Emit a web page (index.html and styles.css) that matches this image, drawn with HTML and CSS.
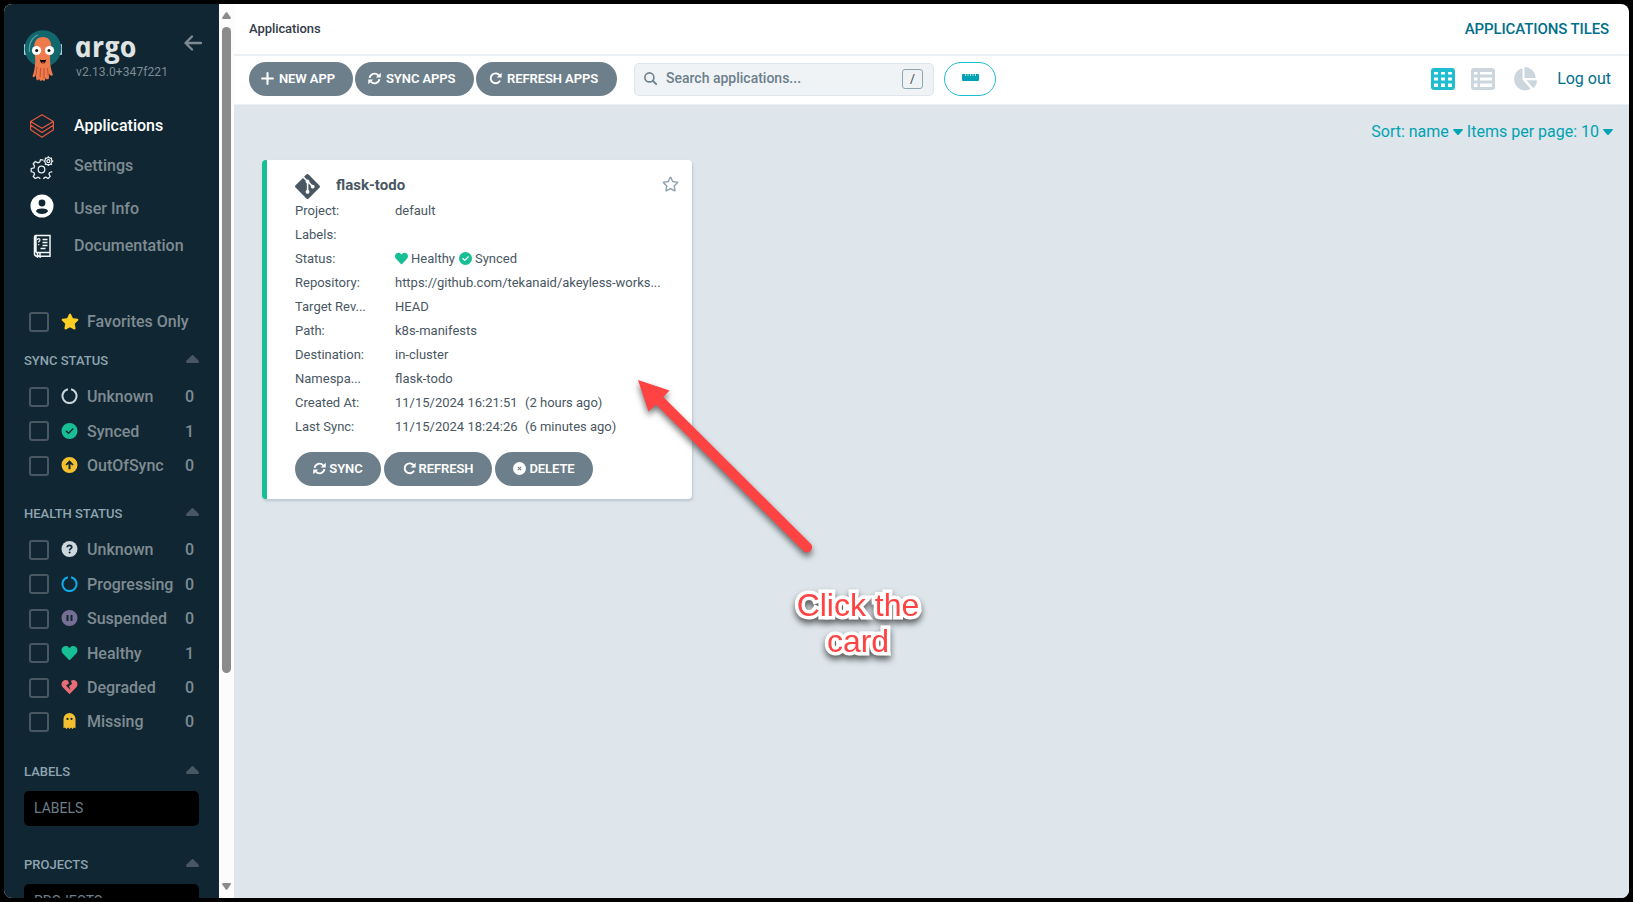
FILE: index.html
```html
<!DOCTYPE html>
<html lang="en">
<head>
<meta charset="utf-8">
<title>Applications Tiles - Argo CD</title>
<link rel="stylesheet" href="styles.css">
</head>
<body>
<svg class="defs" aria-hidden="true">
  <symbol id="star" viewBox="0 0 576 512"><path d="M259.3 17.8L194 150.2 47.9 171.5c-26.2 3.8-36.7 36.1-17.7 54.6l105.7 103-25 145.5c-4.5 26.3 23.2 46 46.4 33.7L288 439.6l130.7 68.7c23.2 12.2 50.9-7.4 46.4-33.7l-25-145.5 105.7-103c19-18.5 8.5-50.8-17.7-54.6L382 150.2 316.7 17.8c-11.7-23.6-45.6-23.9-57.4 0z"/></symbol>
  <symbol id="star-o" viewBox="0 0 576 512"><path d="M528.1 171.5L382 150.2 316.7 17.8c-11.7-23.6-45.6-23.9-57.4 0L194 150.2 47.9 171.5c-26.2 3.8-36.7 36.1-17.7 54.6l105.7 103-25 145.5c-4.5 26.3 23.2 46 46.4 33.7L288 439.6l130.7 68.7c23.2 12.2 50.9-7.4 46.4-33.7l-25-145.5 105.7-103c19-18.5 8.500-50.800-17.700-54.600zM388.600 312.300l23.700 138.400L288 385.400l-124.300 65.300 23.700-138.400-100.600-98 139-20.200 62.200-126 62.200 126 139 20.200-100.600 98z"/></symbol>
  <symbol id="heart" viewBox="0 0 512 512"><path d="M462.3 62.6C407.5 15.9 326 24.3 275.7 76.2L256 96.5l-19.7-20.3C186.1 24.3 104.5 15.9 49.7 62.6c-62.8 53.6-66.1 149.8-9.9 207.9l193.5 199.8c12.5 12.9 32.8 12.9 45.3 0l193.5-199.8c56.3-58.1 53-154.3-9.8-207.9z"/></symbol>
  <symbol id="broken" viewBox="0 0 512 512"><path d="M473.7 73.8l-2.4-2.5c-46-47-118-51.7-169.6-14.8L336 159.9l-96 64 48 128-144-144 96-64-28.6-86.5C159.7 19.6 87 24 40.7 71.4l-2.4 2.4C-10.4 123.6-12.5 202.9 31 256l212.1 218.6c7.1 7.3 18.6 7.3 25.7 0L481 255.9c43.5-53 41.4-132.3-7.3-182.1z"/></symbol>
  <symbol id="check" viewBox="0 0 16 16"><path fill-rule="evenodd" d="M8 0a8 8 0 1 1 0 16A8 8 0 0 1 8 0zM11.300 5L7 9.300 4.900 7.200 3.900 8.200 7 11.300 12.300 6z"/></symbol>
  <symbol id="up" viewBox="0 0 16 16"><path fill-rule="evenodd" d="M8 0a8 8 0 1 1 0 16A8 8 0 0 1 8 0zM8 3.3L3.9 7.4 5 8.5 7 7V12.3H9V7L11 8.5 12.1 7.4z"/></symbol>
  <symbol id="notch" viewBox="0 0 16 16"><path d="M9.600 1.200a7 7 0 1 1-3.200 0" fill="none" stroke="currentColor" stroke-width="2"/></symbol>
  <symbol id="question" viewBox="0 0 16 16"><circle cx="8" cy="8" r="8"/><path d="M5.7 6.2C5.8 4.9 6.6 4.4 8 4.4s2.3.7 2.3 1.8C10.3 7.6 8.100 7.500 8.100 9.400" fill="none" stroke="#102733" stroke-width="1.6"/><circle cx="8.1" cy="11.6" r="1" fill="#102733"/></symbol>
  <symbol id="pause" viewBox="0 0 16 16"><path fill-rule="evenodd" d="M8 0a8 8 0 1 1 0 16A8 8 0 0 1 8 0zM5 5V11H7V5zM9 5V11H11V5z"/></symbol>
  <symbol id="ghost" viewBox="0 0 12 16"><path fill-rule="evenodd" d="M6 0a6 6 0 0 1 6 6v9.3L10.6 14.6 9 16 7.5 14.6 6 16 4.5 14.6 3 16 1.4 14.6 0 15.3V6A6 6 0 0 1 6 0zM4 4.8a1.100 1.100 0 1 0 0 2.200 1.100 1.100 0 0 0 0-2.200zM8 4.800a1.100 1.100 0 1 0 0 2.200 1.100 1.100 0 0 0 0-2.200z"/></symbol>
  <symbol id="caret-up" viewBox="0 0 13 8"><path d="M5.6.4a1.300 1.300 0 0 1 1.800 0l5.200 5.400Q13.500 7.500 12 8H1Q-.5 7.500.4 5.800z"/></symbol>
  <symbol id="caret-down" viewBox="0 0 10 6"><path d="M.8 0h8.400q1.100.3.400 1.300L5.700 5.700q-.7.500-1.400 0L.4 1.300Q-.3.300.8 0z"/></symbol>
  <symbol id="plus" viewBox="0 0 12 12"><path d="M6 1v10M1 6h10" fill="none" stroke="currentColor" stroke-width="1.900" stroke-linecap="round"/></symbol>
  <symbol id="sync" viewBox="0 0 16 16"><path d="M2 7.200A6 6 0 0 1 12.500 4.200M14 8.800A6 6 0 0 1 3.500 11.800" fill="none" stroke="currentColor" stroke-width="2.200"/><path d="M15.700.8v6.100H9.600zM.3 15.200V9.100h6.100z"/></symbol>
  <symbol id="redo" viewBox="0 0 16 16"><path d="M12.900 3.900a6.100 6.100 0 1 0 .2 7.500" fill="none" stroke="currentColor" stroke-width="2.300" stroke-linecap="round"/><path d="M15.600.8v6.100H9.500z"/></symbol>
  <symbol id="cross" viewBox="0 0 16 16"><circle cx="8" cy="8" r="8"/><path d="M6 6l4 4M10 6l-4 4" stroke="#6d7f8b" stroke-width="1.300"/></symbol>
  <symbol id="git" viewBox="0 30 448 452"><path d="M439.55 236.05L244 40.45a28.87 28.87 0 0 0-40.81 0l-40.66 40.63 51.52 51.52c27.06-9.14 52.68 16.77 43.39 43.68l49.66 49.66c34.23-11.8 61.18 31 35.47 56.69-26.49 26.49-70.21-2.87-56-37.34L240.22 199v121.85c25.3 12.54 22.26 41.85 9.08 55a34.34 34.34 0 0 1-48.55 0c-17.57-17.6-11.07-46.91 11.25-56v-123c-20.8-8.51-24.6-30.74-18.64-45L142.57 101 8.45 235.14a28.86 28.86 0 0 0 0 40.81l195.61 195.6a28.86 28.86 0 0 0 40.8 0l194.69-194.69a28.86 28.86 0 0 0 0-40.81z"/></symbol>
</svg>

<div class="window">
  <aside class="sidebar">
    <div class="brand">
      <svg class="octo" viewBox="0 0 38 51">
        <rect x="0" y="14" width="3" height="11" rx="1" fill="#b5d2e8"/><rect x="35" y="14" width="3" height="11" rx="1" fill="#b5d2e8"/>
        <circle cx="19" cy="18.500" r="18.300" fill="#12676d"/>
        <path d="M5.500 22C4.500 13 9 6.500 14 5" fill="none" stroke="#5b9da0" stroke-width="1.300"/>
        <path d="M19 7c5.500 0 8.300 4 8.300 9.500 0 6-1.800 9-1.300 14 .4 6 1 9 3 14.500-1.500 1.500-3 .5-3.500-1.500l-.8 5.500c-1.700.8-2.700.3-3-1.500l-.7 3c-1.300.5-2 .3-2.500-.5l-1.300.8c-1 .3-1.800-.3-1.900-2l-1.300 1.500c-1.200.3-1.800-.5-1.700-2.500l-.8-3c-.7 2.500-1.700 3-3 1.500 2-5 2.300-9 2.700-14 .4-5-1-9.500-1-15.500C10.200 11 13.300 7 19 7z" fill="#ef7b4d"/>
        <path d="M13 37l-1 8M16.500 38l-.4 9M20 38v10M23.500 38l.8 8" stroke="#b64b2d" stroke-width=".9"/>
        <circle cx="12.500" cy="20.500" r="4.600" fill="#fff"/><circle cx="25.500" cy="20.500" r="4.600" fill="#fff"/>
        <circle cx="12.700" cy="20.500" r="1.500" fill="#111"/><circle cx="25" cy="20.500" r="1.500" fill="#111"/>
        <path d="M15.800 29.500q3.200 1.200 6.400 0-.7 4-3.200 4t-3.200-4z" fill="#111"/><path d="M17.500 32.300q1.500-.8 3 0-1.500 1.300-3 0z" fill="#ef4f4f"/>
      </svg>
      <div class="brand-text">
        <div class="wordmark">argo</div>
        <div class="version">v2.13.0+347f221</div>
      </div>
      <svg class="collapse" viewBox="0 0 18 16"><path d="M8 1.500L1.500 8 8 14.500M1.500 8H17" fill="none" stroke="#7f8b92" stroke-width="2.300" stroke-linecap="round" stroke-linejoin="round"/></svg>
    </div>
    <nav class="nav">
      <a class="nav-item active"><svg class="nav-icon apps" viewBox="0 0 24 24" stroke="#e6573b" stroke-width="1.200" stroke-linejoin="round"><path d="M12 .7L23.400 7.400 12 14.300.6 7.400zM.6 7.400v3.900L12 18.500l11.400-7.200V7.400M.6 11.300v4.400L12 23.200l11.400-7.500v-4.400"/></svg>Applications</a>
      <a class="nav-item settings"><svg class="nav-icon" viewBox="0 0 24 24" stroke="#e4eaed" stroke-width="1.300" stroke-linejoin="round"><path d="M13.500 5.200l-3-.5-.8 2.400-1.800.8L5.400 6.500 3.200 8.800l1.400 2.400-.7 1.700-2.700.8v3l2.700.8.7 1.700-1.400 2.400 2.200 2 2.400-1.400 1.800.8.700 2.200h3l.7-2.300 1.700-.8 2.400 1.400 2.100-2.100-1.300-2.400.7-1.500 2.600-.8"/><circle cx="11.500" cy="14.500" r="3.300"/><circle cx="18.400" cy="6.200" r="1.500"/><path d="M18.400 1.300v1.500M18.400 9.600v1.500M13.500 6.200H15M21.800 6.200h1.500M14.900 2.700L16 3.800M20.800 8.600l1.100 1.100M21.900 2.700l-1.100 1.100M16 8.600l-1.100 1.100"/><circle cx="18.400" cy="6.200" r="3.500"/></svg><span>Settings</span></a>
      <a class="nav-item user-info"><svg class="nav-icon user" viewBox="0 0 24 24"><circle cx="12" cy="12" r="11.500" fill="#fff"/><circle cx="12" cy="9" r="3.400" fill="#102733"/><path d="M6 17.500q0-3 6-3t6 3q-2.300 2.500-6 2.500t-6-2.500z" fill="#102733"/></svg><span>User Info</span></a>
      <a class="nav-item last"><svg class="nav-icon" viewBox="0 0 24 24" stroke="#f2f6f8" stroke-width="1.500"><path d="M6 18.500V1.500h14v20.700H10M6 18.500h14M4.500 18.500V3Q4.500 1.500 6 1.500M4.500 18v2.200q.3 2 2.500 2M7.500 19v4l1.200-1 1.300 1v-4"/><path d="M12.500 5.500h5M12.500 8.500h5M12.500 11.500h5M10.500 14.500h5" stroke-width="1.300"/><path d="M7.300 6q.1-1.300 1.400-1.300T10 6q0 1-1.300 1.600v1M8.700 10v1.200" stroke-width="1.200"/></svg><span>Documentation</span></a>
    </nav>

    <div class="filter favorites"><i class="box"></i><svg class="ic star"><use href="#star"/></svg><span>Favorites Only</span></div>

    <div class="group first">SYNC STATUS<svg class="tri"><use href="#caret-up"/></svg></div>
    <div class="filter"><i class="box"></i><svg class="ic light"><use href="#notch"/></svg><span>Unknown</span><b>0</b></div>
    <div class="filter"><i class="box"></i><svg class="ic green"><use href="#check"/></svg><span>Synced</span><b>1</b></div>
    <div class="filter"><i class="box"></i><svg class="ic yellow"><use href="#up"/></svg><span>OutOfSync</span><b>0</b></div>

    <div class="group">HEALTH STATUS<svg class="tri"><use href="#caret-up"/></svg></div>
    <div class="filter"><i class="box"></i><svg class="ic light"><use href="#question"/></svg><span>Unknown</span><b>0</b></div>
    <div class="filter"><i class="box"></i><svg class="ic blue"><use href="#notch"/></svg><span>Progressing</span><b>0</b></div>
    <div class="filter"><i class="box"></i><svg class="ic purple"><use href="#pause"/></svg><span>Suspended</span><b>0</b></div>
    <div class="filter"><i class="box"></i><svg class="ic green"><use href="#heart"/></svg><span>Healthy</span><b>1</b></div>
    <div class="filter"><i class="box"></i><svg class="ic red"><use href="#broken"/></svg><span>Degraded</span><b>0</b></div>
    <div class="filter"><i class="box"></i><svg class="ic yellow"><use href="#ghost"/></svg><span>Missing</span><b>0</b></div>

    <div class="group labels">LABELS<svg class="tri"><use href="#caret-up"/></svg></div>
    <div class="field">LABELS</div>
    <div class="group projects">PROJECTS<svg class="tri"><use href="#caret-up"/></svg></div>
    <div class="field">PROJECTS</div>
  </aside>

  <div class="scrollbar">
    <svg class="sb-arrow" viewBox="0 0 9 7"><path d="M3.700.6q.8-.9 1.600 0L8.700 5.500Q9.200 7 8 7H1Q-.2 7 .3 5.500z"/></svg>
    <div class="thumb"></div>
    <svg class="sb-arrow down" viewBox="0 0 9 7"><path d="M3.700.6q.8-.9 1.600 0L8.700 5.500Q9.200 7 8 7H1Q-.2 7 .3 5.500z"/></svg>
  </div>

  <main class="main">
    <header class="topbar"><span class="crumb">Applications</span><span class="page-title">APPLICATIONS TILES</span></header>
    <div class="toolbar">
      <button class="btn new"><svg><use href="#plus"/></svg>NEW APP</button>
      <button class="btn sync-apps"><svg><use href="#sync"/></svg>SYNC APPS</button>
      <button class="btn refresh-apps"><svg><use href="#redo"/></svg>REFRESH APPS</button>
      <div class="search">
        <svg viewBox="0 0 13 13"><path d="M9 9l3.200 3.200" stroke="#6d7f8b" stroke-width="1.800" stroke-linecap="round"/><circle cx="5.400" cy="5.400" r="4.500" fill="none" stroke="#6d7f8b" stroke-width="1.600"/></svg>
        <span>Search applications...</span><kbd>/</kbd>
      </div>
      <div class="ruler"><svg viewBox="0 0 17 8"><rect width="17" height="7" rx="1" fill="#00a2b3"/><path d="M3.500 0v2M6 0v2M8.500 0v2M11 0v2M13.500 0v2" stroke="#d5f0f3" stroke-width=".8"/></svg></div>
      <div class="views">
        <svg class="v-grid" viewBox="0 0 24 22"><path fill="#1fbdd0" fill-rule="evenodd" d="M3 0h18q3 0 3 3v16q0 3-3 3H3q-3 0-3-3V3Q0 0 3 0zM3 4v2.500h4V4zM10 4v2.500h4V4zM17 4v2.500h4V4zM3 9.500v3h4v-3zM10 9.500v3h4v-3zM17 9.500v3h4v-3zM3 15.500V19h4v-3.500zM10 15.500V19h4v-3.500zM17 15.500V19h4v-3.500z"/></svg>
        <svg class="v-list" viewBox="0 0 24 22"><path fill="#ccd6dd" fill-rule="evenodd" d="M3 0h18q3 0 3 3v16q0 3-3 3H3q-3 0-3-3V3Q0 0 3 0zM3 4v2.500h3.500V4zM9 4v2.500h12V4zM3 9.500v3h3.500v-3zM9 9.500v3h12v-3zM3 15.500V19h3.500v-3.500zM9 15.500V19h12v-3.500z"/></svg>
        <svg class="v-pie" viewBox="0 0 26 24"><path fill="#ccd6dd" d="M11.500 2.200v10.300l7.500 8.600q.6.900-.4 1.500A11.300 11.300 0 1 1 10.300 1.500q1.200-.1 1.200.7zM13.500 1q0-1 1-.9A11.200 11.200 0 0 1 24.700 10q.1 1-.9 1H13.500zM15.500 13.200h9.700q.9 0 .8 1a10 10 0 0 1-3 6.300q-.7.600-1.300-.1z"/></svg>
        <a class="logout">Log out</a>
      </div>
    </div>
    <section class="content">
      <div class="sorting"><span>Sort: name</span><svg><use href="#caret-down"/></svg><span class="per-page">Items per page: 10</span><svg><use href="#caret-down"/></svg></div>
      <article class="card">
        <div class="card-head"><svg class="git"><use href="#git"/></svg><h2>flask-todo</h2><svg class="fav"><use href="#star-o"/></svg></div>
        <dl class="facts">
          <dt>Project:</dt><dd>default</dd>
          <dt>Labels:</dt><dd></dd>
          <dt>Status:</dt><dd class="status"><svg><use href="#heart"/></svg>Healthy<svg class="ok"><use href="#check"/></svg>Synced</dd>
          <dt>Repository:</dt><dd class="repo">https://github.com/tekanaid/akeyless-works...</dd>
          <dt>Target Rev...</dt><dd>HEAD</dd>
          <dt>Path:</dt><dd>k8s-manifests</dd>
          <dt>Destination:</dt><dd>in-cluster</dd>
          <dt>Namespa...</dt><dd>flask-todo</dd>
          <dt>Created At:</dt><dd>11/15/2024 16:21:51&nbsp; <span class="ago">(2 hours ago)</span></dd>
          <dt>Last Sync:</dt><dd>11/15/2024 18:24:26&nbsp; <span class="ago">(6 minutes ago)</span></dd>
        </dl>
        <div class="actions">
          <button class="btn a-sync"><svg><use href="#sync"/></svg>SYNC</button>
          <button class="btn a-refresh"><svg><use href="#redo"/></svg>REFRESH</button>
          <button class="btn a-delete"><svg><use href="#cross"/></svg>DELETE</button>
        </div>
      </article>
    </section>
  </main>
</div>

<svg class="arrow" viewBox="0 0 190 190"><path d="M8 10L39.500 20.500 33.300 27 180.500 173.500A5 5 0 0 1 173.500 181L26 34.500 18.500 41.500z" fill="#ff4242"/></svg>
<div class="callout">Click the<br>card</div>
</body>
</html>
```

FILE: styles.css
```css
* { box-sizing: border-box; }
body {
  margin: 0;
  width: 1633px;
  height: 902px;
  padding: 4px;
  overflow: hidden;
  background: #000;
  font-family: Roboto, "Liberation Sans", sans-serif;
  color: #495763;
}
svg { display: block; flex: none; fill: currentColor; }
.defs { position: absolute; width: 0; height: 0; }
.window {
  display: flex;
  width: 1625px;
  height: 894px;
  overflow: hidden;
  border-radius: 8px;
  background: #fff;
}

/* Sidebar */
.sidebar { width: 215px; height: 894px; padding: 0 20px; overflow: hidden; background: #102733; flex: none; }
.brand { display: flex; height: 101px; padding-top: 26px; }
.octo { width: 38px; height: 51px; }
.brand-text { margin-left: 14px; width: 96px; }
.wordmark {
  height: 38px;
  margin-top: -3px;
  font: italic 700 29px/38px "Open Sans", sans-serif;
  color: #dfe3e3;
  transform: skewX(12deg);
  transform-origin: 0 29px;
}
.version { font-size: 12px; line-height: 14px; margin-top: 0; color: #7d8b93; white-space: nowrap; letter-spacing: .1px; }
.collapse { width: 18px; height: 16px; margin: 5px 0 0 16px; }
.nav-item { display: flex; align-items: center; height: 41px; padding-left: 6px; font-size: 16px; font-weight: 500; color: #7f8b92; }
.nav-item.active { color: #fff; }
.nav-item.last { height: 36px; }
.settings span, .last span { margin-top: -2px; }
.user-info span { margin-top: 2px; }
.nav-icon { width: 24px; height: 24px; margin-right: 20px; fill: none; }
.nav-icon.user { margin-bottom: 4px; }
.filter { display: flex; align-items: center; height: 34.4px; padding: 0 5px; font-size: 16px; font-weight: 500; color: #7f8b92; }
.filter.favorites { margin-top: 40.8px; }
.filter b { margin-left: auto; font-weight: 500; }
.box { width: 20px; height: 20px; margin-right: 12px; border: 2px solid #495763; border-radius: 3px; flex: none; }
.ic { width: 17px; height: 16px; margin: -1px 9px 0 0; }
.ic.star { width: 18px; height: 17px; margin: 0 8px 0 0; }
.star { color: #ffce22; }
.light { color: #ccd6dd; }
.green { color: #18be94; }
.yellow { color: #f4c030; }
.blue { color: #0dadea; }
.purple { color: #766f94; }
.red { color: #e96d76; }
.group { display: flex; align-items: center; justify-content: space-between; height: 39px; margin-top: 10.800px; font-size: 13px; font-weight: 500; color: #8fa4b1; }
.group.first { margin-top: 1.600px; }
.group.labels { margin-top: 13px; }
.group.projects { margin-top: 19px; }
.tri { width: 13px; height: 8px; margin-top: -3px; color: #495763; }
.field { height: 35px; padding-left: 10px; border-radius: 5px; background: #000; color: #6d7f8b; font-size: 14px; line-height: 35px; }

/* Scrollbar */
.scrollbar { display: flex; flex-direction: column; align-items: center; width: 15px; padding: 8px 0; background: #fcfcfc; color: #8b8b8b; flex: none; }
.sb-arrow { width: 9px; height: 7px; }
.thumb { width: 9px; height: 646px; margin-top: 8px; border-radius: 5px; background: #8b8b8b; }
.sb-arrow.down { margin-top: auto; transform: rotate(180deg); }

/* Header */
.main { display: flex; flex-direction: column; flex: 1; min-width: 0; }
.topbar { display: flex; align-items: center; justify-content: space-between; height: 52px; padding: 0 20px 2px 15px; border-bottom: 2px solid #eaf0f3; }
.crumb { font-size: 13px; font-weight: 500; color: #363c4a; letter-spacing: -.07px; }
.page-title { margin-top: 2px; font-size: 15px; font-weight: 500; color: #006f8a; letter-spacing: -.1px; }
.toolbar { display: flex; align-items: center; height: 49px; padding: 0 18px 3px 15px; border-bottom: 1px solid #eaf0f3; }
.btn {
  display: flex;
  align-items: center;
  height: 34px;
  margin: 0 2px 0 0;
  padding: 0;
  border: 0;
  border-radius: 17px;
  background: #6d7f8b;
  color: #fff;
  font: 600 13px Roboto, sans-serif;
  letter-spacing: -.08px;
  white-space: nowrap;
}
.btn svg { width: 13px; height: 13px; margin-right: 5px; }
.new { width: 104px; padding-left: 12px; }
.sync-apps { width: 119px; padding-left: 13px; }
.refresh-apps { width: 141px; padding-left: 13px; }
.search { display: flex; align-items: center; width: 300px; height: 33px; margin: 1px 0 0 15px; padding: 0 10px; border: 1px solid #dee6eb; border-radius: 5px; background: #eff3f6; color: #6d7f8b; font-size: 14px; font-weight: 500; }
.search svg { width: 13px; height: 13px; margin: -2px 9px 0 -1px; }
.search span { margin-top: -2px; }
.search kbd { width: 21px; height: 20px; margin-left: auto; border: 1px solid #8fa4b1; border-radius: 3px; color: #363c4a; font: 12px/18px Roboto, sans-serif; text-align: center; }
.ruler { display: grid; place-items: center; width: 52px; height: 34px; margin-left: 10px; padding-bottom: 1px; border: 1px solid #1fbdd0; border-radius: 17px; }
.ruler svg { width: 17px; height: 8px; }
.views { display: flex; align-items: center; margin-left: auto; }
.v-grid { width: 24px; height: 22px; }
.v-list { width: 24px; height: 22px; margin-left: 16px; }
.v-pie { width: 26px; height: 24px; margin-left: 16px; }
.logout { margin-left: 20px; font-size: 16px; color: #006f8a; }

/* Content */
.content { flex: 1; background: #dee6eb; }
.sorting { display: flex; align-items: center; justify-content: flex-end; height: 54px; padding: 0 16px 2px 0; color: #00a2b3; font-size: 16px; }
.sorting svg { width: 10px; height: 6px; margin: 2px 0 0 4px; }
.per-page { margin-left: 4px; }
.card { width: 430px; height: 339px; margin: 1px 0 0 28px; padding: 12px 13px 0 28px; border-left: 5px solid #18be94; border-radius: 4px; background: #fff; box-shadow: 1px 2px 3px rgba(109, 127, 139, .3); }
.card-head { display: flex; align-items: center; height: 26px; }
.git { width: 25px; height: 25px; margin-top: 2px; }
.card h2 { margin: 0 0 0 16px; font-size: 15px; font-weight: 700; }
.fav { width: 17px; height: 16px; margin: -2px 0 0 auto; color: #8fa4b1; }
.facts { display: grid; grid-template-columns: 100px 1fr; grid-auto-rows: 24px; align-items: center; margin: 0; font-size: 13px; white-space: nowrap; }
.facts dd { margin: 0; }
.repo { letter-spacing: -.02px; }
.ago { margin-left: 1px; }
.status { display: flex; align-items: center; }
.status svg { width: 13px; height: 13px; margin-right: 3px; color: #18be94; }
.status .ok { margin-left: 4px; }
.actions { display: flex; gap: 3px; margin-top: 14px; }
.actions .btn { margin: 0; padding-bottom: 2px; justify-content: center; }
.actions .btn svg { margin-right: 3px; }
.a-sync { width: 86px; }
.a-refresh { width: 108px; }
.a-delete { width: 98px; }

/* Annotation */
.arrow { position: absolute; left: 630px; top: 370px; width: 190px; height: 190px; overflow: visible; filter: drop-shadow(0 4px 3px rgba(0, 0, 0, .55)); }
.callout {
  position: absolute;
  left: 778px;
  top: 587px;
  width: 160px;
  text-align: center;
  font: 32px/36px "Liberation Sans", Arial, sans-serif;
  color: #ff4242;
  -webkit-text-stroke: 7px #fff;
  paint-order: stroke fill;
  stroke-linejoin: round;
  filter: drop-shadow(0 4px 3px rgba(0, 0, 0, .6));
}
```
